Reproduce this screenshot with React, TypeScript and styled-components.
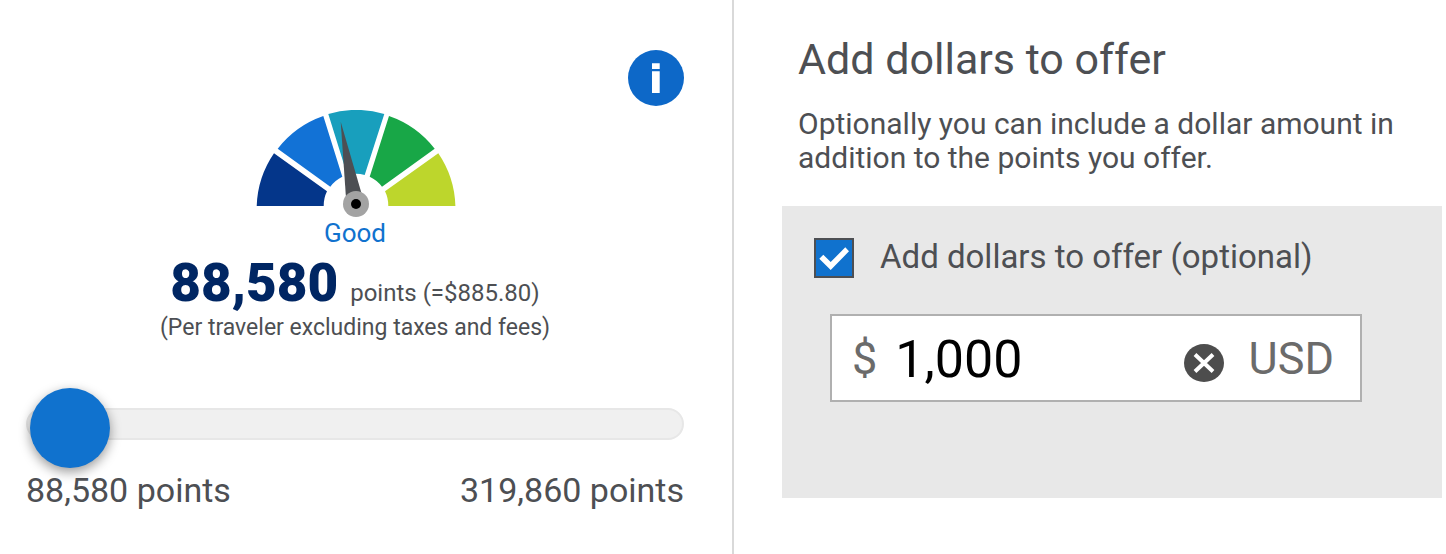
import React, { useState } from "react";
import styled, { createGlobalStyle } from "styled-components";

const GlobalStyle = createGlobalStyle`
  *, *::before, *::after { box-sizing: border-box; }
  html, body, #root { height: 100%; }
  body {
    margin: 0;
    background: #fff;
    color: #4d4f53;
    font-family: Roboto, "Liberation Sans", sans-serif;
  }
`;

const Page = styled.div`
  display: grid;
  grid-template-columns: minmax(0, 734fr) minmax(0, 712fr);
  min-height: 100%;
`;

const OfferPanel = styled.section`
  display: flex;
  flex-direction: column;
  align-items: center;
  padding: 50px 48px 32px 26px;
  border-right: 2px solid #d9d9d9;
`;

const InfoButton = styled.button`
  align-self: flex-end;
  width: 56px;
  height: 56px;
  padding: 0;
  border: 0;
  border-radius: 50%;
  background: #0d68c8;
  cursor: pointer;
`;

const Gauge = styled.svg`
  display: block;
  width: 202px;
  height: 108px;
  margin-top: 4px;
`;

const Rating = styled.div`
  font-size: 26px;
  line-height: 30px;
  color: #1072ce;
`;

const PointsLine = styled.div`
  display: flex;
  align-items: baseline;
  gap: 12px;
  margin-top: 15px;
  font-size: 24px;
  line-height: 40px;
`;

const PointsValue = styled.strong`
  font-size: 53px;
  font-weight: 900;
  color: #002663;
`;

const Note = styled.div`
  font-size: 23px;
  line-height: 30px;
`;

const Slider = styled.input`
  appearance: none;
  width: 100%;
  height: 32px;
  margin: 65px 0 0;
  padding: 0 2px;
  border: 2px solid #e7e7e7;
  border-radius: 16px;
  background: #f0f0f0;
  cursor: pointer;

  &::-webkit-slider-runnable-track {
    height: 28px;
  }

  &::-webkit-slider-thumb {
    appearance: none;
    width: 80px;
    height: 80px;
    margin-top: -22px;
    border: 0;
    border-radius: 50%;
    background: #1072ce;
    box-shadow: 0 4px 12px rgba(0, 0, 0, 0.4);
  }
`;

const RangeLabels = styled.div`
  display: flex;
  justify-content: space-between;
  width: 100%;
  margin-top: 30px;
  font-size: 34px;
  line-height: 40px;
`;

const DollarsPanel = styled.section`
  padding: 32px 4px 32px 48px;
`;

const Intro = styled.header`
  padding: 0 16px;
`;

const Title = styled.h1`
  margin: 0;
  font-size: 43px;
  font-weight: 400;
  line-height: 54px;
`;

const Description = styled.p`
  margin: 21px 0 0;
  font-size: 30px;
  line-height: 34px;
`;

const OptionBox = styled.div`
  margin-top: 31px;
  padding: 32px 80px 96px 32px;
  background: #e8e8e8;
`;

const OptionLabel = styled.label`
  display: flex;
  align-items: flex-start;
  gap: 26px;
  font-size: 33px;
  line-height: 38px;
  cursor: pointer;
`;

const CheckFrame = styled.span`
  display: grid;
  flex: none;

  & > * { grid-area: 1 / 1; }
`;

const CheckInput = styled.input`
  appearance: none;
  width: 40px;
  height: 40px;
  margin: 0;
  border: 2px solid #4d4f53;
  background: #fff;

  &:checked { background: #1072ce; }
`;

const CheckMark = styled.svg`
  width: 40px;
  height: 40px;
  pointer-events: none;
`;

const AmountField = styled.div`
  display: flex;
  align-items: center;
  height: 88px;
  margin: 36px 0 0 16px;
  padding: 2px 26px 0 20px;
  border: 2px solid #b0b0b0;
  background: #fff;
`;

const Unit = styled.span`
  font-size: 45px;
  line-height: 52px;
  color: #6b6b6b;
`;

const AmountInput = styled.input`
  flex: 1;
  min-width: 0;
  height: 60px;
  padding: 0 18px;
  border: 0;
  outline: 0;
  background: transparent;
  color: #000;
  font-family: inherit;
  font-size: 52px;
`;

const ClearButton = styled.button`
  display: block;
  flex: none;
  margin: 8px 25px 0 0;
  padding: 0;
  border: 0;
  background: none;
  cursor: pointer;

  svg { display: block; }
`;

export default function App() {
  const [points, setPoints] = useState(88580);
  const [checked, setChecked] = useState(true);
  const [amount, setAmount] = useState("1,000");
  const dollars = (points / 100).toLocaleString("en-US", { minimumFractionDigits: 2 });

  return (
    <>
      <GlobalStyle />
      <Page>
        <OfferPanel>
          <InfoButton type="button" aria-label="Offer information">
            <svg width="56" height="56" viewBox="0 0 56 56" fill="#fff">
              <path d="M24 13.3h7.7V19H24zM24 21.3h7.7V43H24z" />
            </svg>
          </InfoButton>
          <Gauge viewBox="-2 0 202 108" role="img" aria-label="Offer strength">
            <path fill="#04368a" d="M.7 96A99 99 0 0 1 18 43.3L71 81.3A32.3 32.3 0 0 0 67.7 96Z" />
            <path fill="#1272d6" d="M21.7 38.7A99 99 0 0 1 67.3 6L86.3 66.7A32.3 32.3 0 0 0 74.3 76.7Z" />
            <path fill="#189fbd" d="M72.3 4A99 99 0 0 1 128.3 4L108.7 65A32.3 32.3 0 0 0 91.3 65Z" />
            <path fill="#18a747" d="M133 6A99 99 0 0 1 178.7 38.7L126 76.7A32.3 32.3 0 0 0 113.7 66.7Z" />
            <path fill="#bdd62c" d="M182.3 43.3A99 99 0 0 1 199.4 96H132.3A32.3 32.3 0 0 0 129 81.3Z" />
            <path fill="#4d4f53" d="M84.7 11.7L90 88L106 85Z" />
            <circle cx="100" cy="94" r="13" fill="#a3a3a3" />
            <circle cx="100" cy="94" r="5" fill="#000" />
          </Gauge>
          <Rating>Good</Rating>
          <PointsLine>
            <PointsValue>{points.toLocaleString("en-US")}</PointsValue>
            <span>points (=${dollars})</span>
          </PointsLine>
          <Note>(Per traveler excluding taxes and fees)</Note>
          <Slider
            type="range"
            aria-label="Points to offer"
            min={88580}
            max={319860}
            step={10}
            value={points}
            onChange={(e) => setPoints(Number(e.target.value))}
          />
          <RangeLabels>
            <span>88,580 points</span>
            <span>319,860 points</span>
          </RangeLabels>
        </OfferPanel>

        <DollarsPanel>
          <Intro>
            <Title>Add dollars to offer</Title>
            <Description>
              Optionally you can include a dollar amount in addition to the points you offer.
            </Description>
          </Intro>
          <OptionBox>
            <OptionLabel>
              <CheckFrame>
                <CheckInput
                  type="checkbox"
                  checked={checked}
                  onChange={(e) => setChecked(e.target.checked)}
                />
                {checked && (
                  <CheckMark viewBox="0 0 40 40" aria-hidden="true">
                    <path fill="#fff" d="M5.3 20.7L9.3 16.7L16.7 24L31.3 9.3L35 13.3L16.7 32Z" />
                  </CheckMark>
                )}
              </CheckFrame>
              Add dollars to offer (optional)
            </OptionLabel>
            <AmountField>
              <Unit>$</Unit>
              <AmountInput
                type="text"
                aria-label="Dollar amount in USD"
                value={amount}
                onChange={(e) => setAmount(e.target.value)}
              />
              <ClearButton type="button" aria-label="Clear amount" onClick={() => setAmount("")}>
                <svg width="40" height="38" viewBox="0 0 40 38">
                  <ellipse cx="20" cy="19" rx="20" ry="19" fill="#4d4d4d" />
                  <path d="M11 10.5L29 27.5M29 10.5L11 27.5" stroke="#fff" strokeWidth="4" />
                </svg>
              </ClearButton>
              <Unit>USD</Unit>
            </AmountField>
          </OptionBox>
        </DollarsPanel>
      </Page>
    </>
  );
}
